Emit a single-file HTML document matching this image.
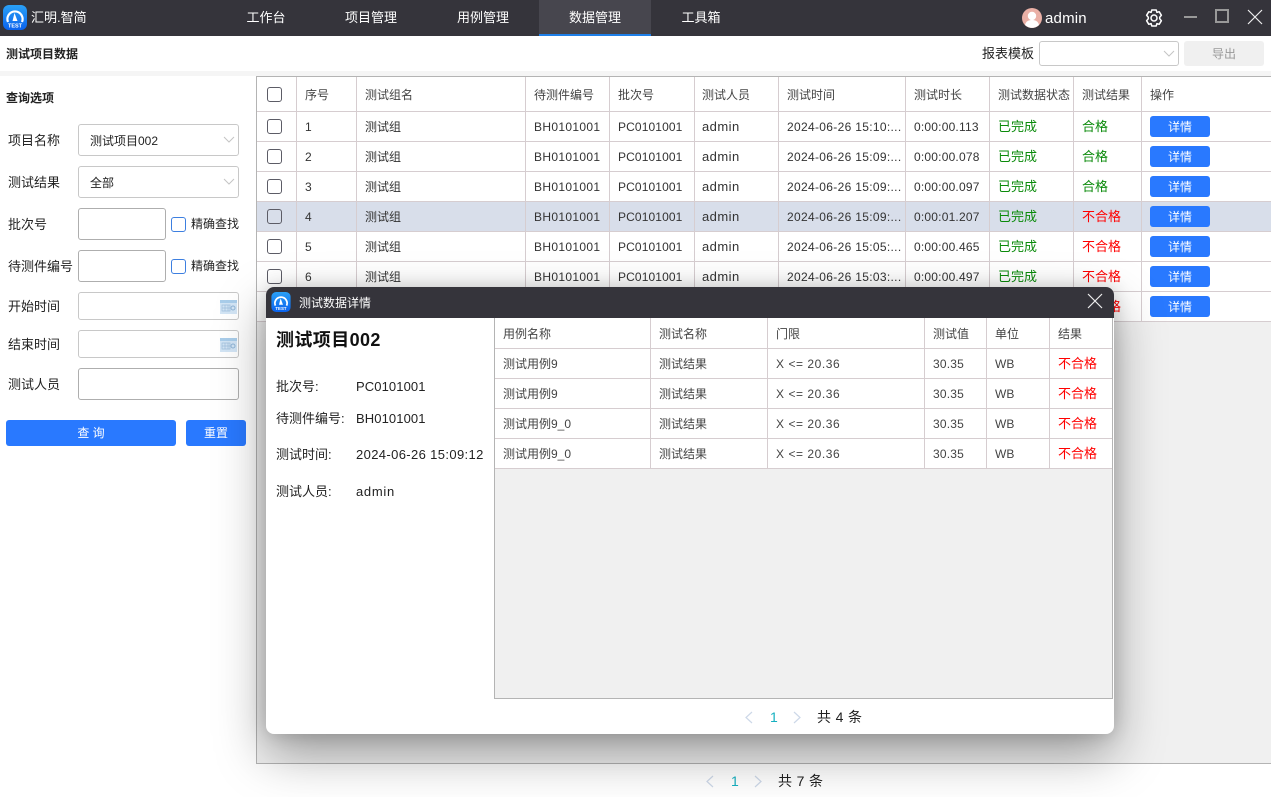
<!DOCTYPE html>
<html><head><meta charset="utf-8">
<style>
html,body{margin:0;padding:0}
body{width:1271px;height:797px;overflow:hidden;position:relative;background:#fff;font-family:"Liberation Sans","Noto Sans CJK SC",sans-serif;font-size:13px;color:#222}
.a{position:absolute;white-space:nowrap}
.t{position:absolute;white-space:nowrap;line-height:20px}
.nav{position:absolute;top:0;height:36px;line-height:35px;color:#fff;font-size:13px;text-align:center;width:112px}
.box{position:absolute;box-sizing:border-box;border:1px solid #c8c8c8;border-radius:3px;background:#fff}
.box2{position:absolute;box-sizing:border-box;border:1px solid #aeaeae;border-radius:3px;background:#fff}
.cb{position:absolute;box-sizing:border-box;width:15px;height:15px;border:1px solid #5c5c66;border-radius:3px;background:#fff}
.cbb{border-color:#3d7fe0}
.btn{position:absolute;background:#2979ff;color:#fff;text-align:center;border-radius:3px}
.hl{position:absolute;height:1px;background:#d6cdd0}
.vl{position:absolute;width:1px;background:#d6cdd0}
.g{color:#0a8a0a;font-size:13px}.r{color:#f00;font-size:13px}
.d{letter-spacing:.32px}.m{font-size:13px;letter-spacing:.45px}.p{letter-spacing:.12px}.h{letter-spacing:.33px}.x{letter-spacing:.55px}.u{letter-spacing:.2px}
</style></head><body>

<!-- top bar -->
<div class="a" style="left:0;top:0;width:1271px;height:36px;background:#35343b"></div>
<svg class="a" style="left:3px;top:5px" width="24" height="25" viewBox="0 0 24 25"><defs><linearGradient id="lg" x1="0" y1="0" x2="0" y2="1"><stop offset="0" stop-color="#2aa0f5"/><stop offset="1" stop-color="#0a62ee"/></linearGradient></defs><rect width="24" height="25" rx="6" fill="url(#lg)"/><path d="M5 17a7.6 7.6 0 1 1 14 0" fill="none" stroke="#fff" stroke-width="2.2"/><path d="M11.5 8l-2 8h5z" fill="#fff"/><text x="12" y="22.5" font-size="5.5" font-weight="bold" fill="#fff" text-anchor="middle" font-family="Liberation Sans">TEST</text></svg>
<div class="t" style="left:31px;top:8px;color:#fff;font-size:13px">汇明.智简</div>
<div class="nav" style="left:210px">工作台</div>
<div class="nav" style="left:315px">项目管理</div>
<div class="nav" style="left:427px">用例管理</div>
<div class="a" style="left:539px;top:0;width:112px;height:36px;background:#47464e;border-bottom:2px solid #1e7fe8;box-sizing:border-box"></div>
<div class="nav" style="left:539px">数据管理</div>
<div class="nav" style="left:645px">工具箱</div>
<svg class="a" style="left:1022px;top:8px" width="20" height="20" viewBox="0 0 20 20"><circle cx="10" cy="10" r="10" fill="#eab0a6"/><circle cx="10" cy="8" r="4.2" fill="#fff"/><path d="M3 17c1-4 4-5 7-5s6 1 7 5a10 10 0 0 1-14 0z" fill="#fff"/></svg>
<div class="t" style="left:1045px;top:9px;color:#fff;font-size:15px;letter-spacing:.2px">admin</div>
<svg class="a" style="left:1144px;top:8px" width="20" height="20" viewBox="0 0 20 20" fill="none" stroke="#fff" stroke-width="1.5" stroke-linejoin="round"><path d="M7.8 2h4.4l.7 2.4 2.3-.7 2.2 3.6-1.7 1.9 0 1.6 1.7 1.9-2.2 3.6-2.3-.7-.7 2.4H7.8l-.7-2.4-2.3.7-2.2-3.6 1.7-1.9 0-1.6-1.7-1.9 2.2-3.6 2.3.7z"/><circle cx="10" cy="10" r="3"/></svg>
<div class="a" style="left:1184px;top:16px;width:13px;height:2px;background:#999"></div>
<div class="a" style="left:1215px;top:9px;width:14px;height:14px;box-sizing:border-box;border:2px solid #999"></div>
<svg class="a" style="left:1247px;top:9px" width="16" height="16" viewBox="0 0 16 16" stroke="#eee" stroke-width="1.2"><path d="M1 1l14 14M15 1L1 15"/></svg>

<!-- sub header -->
<div class="a" style="left:0;top:71px;width:1271px;height:5px;background:#f5f5f5"></div>
<div class="t" style="left:6px;top:44px;font-size:12px;font-weight:bold;color:#222">测试项目数据</div>
<div class="t" style="left:982px;top:44px">报表模板</div>
<div class="box" style="left:1039px;top:41px;width:140px;height:25px"></div>
<svg class="a" style="left:1163px;top:50px" width="12" height="8" viewBox="0 0 12 8" fill="none" stroke="#c4c4c4"><path d="M1 1l5 5 5-5"/></svg>
<div class="a" style="left:1184px;top:41px;width:80px;height:25px;background:#f0f0f0;border-radius:3px;text-align:center;line-height:26px;color:#999;font-size:12px">导出</div>

<!-- left panel -->
<div class="t" style="left:6px;top:88px;font-size:12px;font-weight:bold">查询选项</div>
<div class="t" style="left:8px;top:131px">项目名称</div>
<div class="box" style="left:78px;top:124px;width:161px;height:32px"></div>
<div class="t" style="left:90px;top:131px;font-size:12px">测试项目002</div>
<svg class="a" style="left:223px;top:136px" width="12" height="8" viewBox="0 0 12 8" fill="none" stroke="#c4c4c4"><path d="M1 1l5 5 5-5"/></svg>
<div class="t" style="left:8px;top:173px">测试结果</div>
<div class="box" style="left:78px;top:166px;width:161px;height:32px"></div>
<div class="t" style="left:90px;top:173px;font-size:12px">全部</div>
<svg class="a" style="left:223px;top:178px" width="12" height="8" viewBox="0 0 12 8" fill="none" stroke="#c4c4c4"><path d="M1 1l5 5 5-5"/></svg>
<div class="t" style="left:8px;top:215px">批次号</div>
<div class="box2" style="left:78px;top:208px;width:88px;height:32px"></div>
<div class="cb cbb" style="left:171px;top:217px"></div>
<div class="t" style="left:191px;top:214px;font-size:12px">精确查找</div>
<div class="t" style="left:8px;top:257px">待测件编号</div>
<div class="box2" style="left:78px;top:250px;width:88px;height:32px"></div>
<div class="cb cbb" style="left:171px;top:259px"></div>
<div class="t" style="left:191px;top:256px;font-size:12px">精确查找</div>
<div class="t" style="left:8px;top:297px">开始时间</div>
<div class="box" style="left:78px;top:292px;width:161px;height:28px"></div>
<svg class="a" style="left:220px;top:300px" width="17" height="14" viewBox="0 0 17 14"><rect width="17" height="14" fill="#d3e5f5"/><rect width="17" height="3" fill="#a9cdea"/><path d="M2 5h8v6H2zM5 5v6M8 5v6M2 8h8" fill="none" stroke="#9fbfdc" stroke-width=".7"/><circle cx="13" cy="8" r="2" fill="none" stroke="#8fb4d6"/></svg>
<div class="t" style="left:8px;top:335px">结束时间</div>
<div class="box" style="left:78px;top:330px;width:161px;height:28px"></div>
<svg class="a" style="left:220px;top:338px" width="17" height="14" viewBox="0 0 17 14"><rect width="17" height="14" fill="#d3e5f5"/><rect width="17" height="3" fill="#a9cdea"/><path d="M2 5h8v6H2zM5 5v6M8 5v6M2 8h8" fill="none" stroke="#9fbfdc" stroke-width=".7"/><circle cx="13" cy="8" r="2" fill="none" stroke="#8fb4d6"/></svg>
<div class="t" style="left:8px;top:375px">测试人员</div>
<div class="box2" style="left:78px;top:368px;width:161px;height:32px"></div>
<div class="btn" style="left:6px;top:420px;width:170px;height:26px;line-height:27px;font-size:12px">查 询</div>
<div class="btn" style="left:186px;top:420px;width:60px;height:26px;line-height:27px;font-size:12px">重置</div>

<!-- main table -->
<div class="a" style="left:256px;top:76px;width:1015px;height:688px;box-sizing:border-box;border:1px solid #b4b4b4;border-right:0;background:#f0f0f0"></div>
<div class="a" style="left:257px;top:77px;width:1014px;height:244px;background:#fff"></div>
<div class="a" style="left:257px;top:202px;width:1014px;height:29px;background:#d8deea"></div>
<div class="hl" style="left:257px;top:111px;width:1014px"></div>
<div class="hl" style="left:257px;top:141px;width:1014px"></div>
<div class="hl" style="left:257px;top:171px;width:1014px"></div>
<div class="hl" style="left:257px;top:201px;width:1014px"></div>
<div class="hl" style="left:257px;top:231px;width:1014px"></div>
<div class="hl" style="left:257px;top:261px;width:1014px"></div>
<div class="hl" style="left:257px;top:291px;width:1014px"></div>
<div class="hl" style="left:257px;top:321px;width:1014px"></div>
<div class="vl" style="left:296px;top:77px;height:244px"></div>
<div class="vl" style="left:356px;top:77px;height:244px"></div>
<div class="vl" style="left:525px;top:77px;height:244px"></div>
<div class="vl" style="left:609px;top:77px;height:244px"></div>
<div class="vl" style="left:694px;top:77px;height:244px"></div>
<div class="vl" style="left:778px;top:77px;height:244px"></div>
<div class="vl" style="left:905px;top:77px;height:244px"></div>
<div class="vl" style="left:989px;top:77px;height:244px"></div>
<div class="vl" style="left:1073px;top:77px;height:244px"></div>
<div class="vl" style="left:1141px;top:77px;height:244px"></div>

<div class="cb" style="left:267px;top:87px"></div>
<div style="font-size:12px;color:#444">
<div class="t" style="left:305px;top:85px">序号</div>
<div class="t" style="left:365px;top:85px">测试组名</div>
<div class="t" style="left:534px;top:85px">待测件编号</div>
<div class="t" style="left:618px;top:85px">批次号</div>
<div class="t" style="left:702px;top:85px">测试人员</div>
<div class="t" style="left:787px;top:85px">测试时间</div>
<div class="t" style="left:914px;top:85px">测试时长</div>
<div class="t" style="left:998px;top:85px">测试数据状态</div>
<div class="t" style="left:1082px;top:85px">测试结果</div>
<div class="t" style="left:1150px;top:85px">操作</div>
</div>

<div style="font-size:12px;color:#333">
<div class="cb" style="left:267px;top:119px"></div><div class="t" style="left:305px;top:117px">1</div><div class="t" style="left:365px;top:117px">测试组</div><div class="t h" style="left:534px;top:117px">BH0101001</div><div class="t p" style="left:618px;top:117px">PC0101001</div><div class="t m" style="left:702px;top:117px">admin</div><div class="t d" style="left:787px;top:117px">2024-06-26 15:10:...</div><div class="t u" style="left:914px;top:117px">0:00:00.113</div><div class="t g" style="left:998px;top:117px">已完成</div><div class="t g" style="left:1082px;top:117px">合格</div><div class="btn" style="left:1150px;top:116px;width:60px;height:21px;line-height:22px">详情</div>
<div class="cb" style="left:267px;top:149px"></div><div class="t" style="left:305px;top:147px">2</div><div class="t" style="left:365px;top:147px">测试组</div><div class="t h" style="left:534px;top:147px">BH0101001</div><div class="t p" style="left:618px;top:147px">PC0101001</div><div class="t m" style="left:702px;top:147px">admin</div><div class="t d" style="left:787px;top:147px">2024-06-26 15:09:...</div><div class="t u" style="left:914px;top:147px">0:00:00.078</div><div class="t g" style="left:998px;top:147px">已完成</div><div class="t g" style="left:1082px;top:147px">合格</div><div class="btn" style="left:1150px;top:146px;width:60px;height:21px;line-height:22px">详情</div>
<div class="cb" style="left:267px;top:179px"></div><div class="t" style="left:305px;top:177px">3</div><div class="t" style="left:365px;top:177px">测试组</div><div class="t h" style="left:534px;top:177px">BH0101001</div><div class="t p" style="left:618px;top:177px">PC0101001</div><div class="t m" style="left:702px;top:177px">admin</div><div class="t d" style="left:787px;top:177px">2024-06-26 15:09:...</div><div class="t u" style="left:914px;top:177px">0:00:00.097</div><div class="t g" style="left:998px;top:177px">已完成</div><div class="t g" style="left:1082px;top:177px">合格</div><div class="btn" style="left:1150px;top:176px;width:60px;height:21px;line-height:22px">详情</div>
<div class="cb" style="left:267px;top:209px;background:#d8deea"></div><div class="t" style="left:305px;top:207px">4</div><div class="t" style="left:365px;top:207px">测试组</div><div class="t h" style="left:534px;top:207px">BH0101001</div><div class="t p" style="left:618px;top:207px">PC0101001</div><div class="t m" style="left:702px;top:207px">admin</div><div class="t d" style="left:787px;top:207px">2024-06-26 15:09:...</div><div class="t u" style="left:914px;top:207px">0:00:01.207</div><div class="t g" style="left:998px;top:207px">已完成</div><div class="t r" style="left:1082px;top:207px">不合格</div><div class="btn" style="left:1150px;top:206px;width:60px;height:21px;line-height:22px">详情</div>
<div class="cb" style="left:267px;top:239px"></div><div class="t" style="left:305px;top:237px">5</div><div class="t" style="left:365px;top:237px">测试组</div><div class="t h" style="left:534px;top:237px">BH0101001</div><div class="t p" style="left:618px;top:237px">PC0101001</div><div class="t m" style="left:702px;top:237px">admin</div><div class="t d" style="left:787px;top:237px">2024-06-26 15:05:...</div><div class="t u" style="left:914px;top:237px">0:00:00.465</div><div class="t g" style="left:998px;top:237px">已完成</div><div class="t r" style="left:1082px;top:237px">不合格</div><div class="btn" style="left:1150px;top:236px;width:60px;height:21px;line-height:22px">详情</div>
<div class="cb" style="left:267px;top:269px"></div><div class="t" style="left:305px;top:267px">6</div><div class="t" style="left:365px;top:267px">测试组</div><div class="t h" style="left:534px;top:267px">BH0101001</div><div class="t p" style="left:618px;top:267px">PC0101001</div><div class="t m" style="left:702px;top:267px">admin</div><div class="t d" style="left:787px;top:267px">2024-06-26 15:03:...</div><div class="t u" style="left:914px;top:267px">0:00:00.497</div><div class="t g" style="left:998px;top:267px">已完成</div><div class="t r" style="left:1082px;top:267px">不合格</div><div class="btn" style="left:1150px;top:266px;width:60px;height:21px;line-height:22px">详情</div>
<div class="t r" style="left:1082px;top:297px">不合格</div><div class="btn" style="left:1150px;top:296px;width:60px;height:21px;line-height:22px">详情</div>
</div>

<!-- main pager -->
<svg class="a" style="left:705px;top:775px" width="10" height="13" viewBox="0 0 10 13" fill="none" stroke="#cdd8e8" stroke-width="1.2"><path d="M8 1L2 6.5 8 12"/></svg>
<div class="t" style="left:731px;top:771px;font-size:14px;color:#15b0c0">1</div>
<svg class="a" style="left:753px;top:775px" width="10" height="13" viewBox="0 0 10 13" fill="none" stroke="#cdd8e8" stroke-width="1.2"><path d="M2 1l6 5.5L2 12"/></svg>
<div class="t" style="left:778px;top:771px;font-size:14px;letter-spacing:.35px">共 7 条</div>

<!-- dialog -->
<div class="a" style="left:266px;top:287px;width:848px;height:447px;background:#fff;border-radius:8px;box-shadow:0 20px 50px rgba(0,0,0,.36),0 0 18px rgba(0,0,0,.16)"></div>
<div class="a" style="left:266px;top:287px;width:848px;height:31px;background:#35343b;border-radius:8px 8px 0 0"></div>
<svg class="a" style="left:271px;top:292px" width="20" height="20" viewBox="0 0 24 25"><rect width="24" height="25" rx="6" fill="url(#lg)"/><path d="M5 17a7.6 7.6 0 1 1 14 0" fill="none" stroke="#fff" stroke-width="2.2"/><path d="M11.5 8l-2 8h5z" fill="#fff"/><text x="12" y="22.5" font-size="5.5" font-weight="bold" fill="#fff" text-anchor="middle" font-family="Liberation Sans">TEST</text></svg>
<div class="t" style="left:299px;top:293px;color:#fff;font-size:12px">测试数据详情</div>
<svg class="a" style="left:1087px;top:293px" width="16" height="16" viewBox="0 0 16 16" stroke="#eee" stroke-width="1.2"><path d="M1 1l14 14M15 1L1 15"/></svg>

<div class="t" style="left:276px;top:330px;font-size:18px;font-weight:bold;color:#111;letter-spacing:.4px">测试项目002</div>
<div class="t" style="left:276px;top:377px">批次号:</div><div class="t" style="left:356px;top:377px;letter-spacing:.1px">PC0101001</div>
<div class="t" style="left:276px;top:409px">待测件编号:</div><div class="t" style="left:356px;top:409px;letter-spacing:.1px">BH0101001</div>
<div class="t" style="left:276px;top:445px">测试时间:</div><div class="t" style="left:356px;top:445px;letter-spacing:.37px">2024-06-26 15:09:12</div>
<div class="t" style="left:276px;top:482px">测试人员:</div><div class="t" style="left:356px;top:482px;letter-spacing:.7px">admin</div>

<div class="a" style="left:494px;top:318px;width:619px;height:381px;box-sizing:border-box;border:1px solid #b4b4b4;border-top:0;background:#f0f0f0"></div>
<div class="a" style="left:495px;top:318px;width:617px;height:150px;background:#fff"></div>
<div class="hl" style="left:495px;top:348px;width:617px"></div>
<div class="hl" style="left:495px;top:378px;width:617px"></div>
<div class="hl" style="left:495px;top:408px;width:617px"></div>
<div class="hl" style="left:495px;top:438px;width:617px"></div>
<div class="hl" style="left:495px;top:468px;width:617px"></div>
<div class="vl" style="left:650px;top:318px;height:150px"></div>
<div class="vl" style="left:767px;top:318px;height:150px"></div>
<div class="vl" style="left:924px;top:318px;height:150px"></div>
<div class="vl" style="left:986px;top:318px;height:150px"></div>
<div class="vl" style="left:1049px;top:318px;height:150px"></div>
<div style="font-size:12px;color:#444">
<div class="t" style="left:503px;top:324px">用例名称</div><div class="t" style="left:659px;top:324px">测试名称</div><div class="t" style="left:776px;top:324px">门限</div><div class="t" style="left:933px;top:324px">测试值</div><div class="t" style="left:995px;top:324px">单位</div><div class="t" style="left:1058px;top:324px">结果</div>
<div class="t" style="left:503px;top:354px">测试用例9</div><div class="t" style="left:659px;top:354px">测试结果</div><div class="t x" style="left:776px;top:354px">X &lt;= 20.36</div><div class="t u" style="left:933px;top:354px">30.35</div><div class="t" style="left:995px;top:354px">WB</div><div class="t r" style="left:1058px;top:354px">不合格</div>
<div class="t" style="left:503px;top:384px">测试用例9</div><div class="t" style="left:659px;top:384px">测试结果</div><div class="t x" style="left:776px;top:384px">X &lt;= 20.36</div><div class="t u" style="left:933px;top:384px">30.35</div><div class="t" style="left:995px;top:384px">WB</div><div class="t r" style="left:1058px;top:384px">不合格</div>
<div class="t" style="left:503px;top:414px">测试用例9_0</div><div class="t" style="left:659px;top:414px">测试结果</div><div class="t x" style="left:776px;top:414px">X &lt;= 20.36</div><div class="t u" style="left:933px;top:414px">30.35</div><div class="t" style="left:995px;top:414px">WB</div><div class="t r" style="left:1058px;top:414px">不合格</div>
<div class="t" style="left:503px;top:444px">测试用例9_0</div><div class="t" style="left:659px;top:444px">测试结果</div><div class="t x" style="left:776px;top:444px">X &lt;= 20.36</div><div class="t u" style="left:933px;top:444px">30.35</div><div class="t" style="left:995px;top:444px">WB</div><div class="t r" style="left:1058px;top:444px">不合格</div>
</div>

<svg class="a" style="left:744px;top:711px" width="10" height="13" viewBox="0 0 10 13" fill="none" stroke="#cdd8e8" stroke-width="1.2"><path d="M8 1L2 6.5 8 12"/></svg>
<div class="t" style="left:770px;top:707px;font-size:14px;color:#15b0c0">1</div>
<svg class="a" style="left:792px;top:711px" width="10" height="13" viewBox="0 0 10 13" fill="none" stroke="#cdd8e8" stroke-width="1.2"><path d="M2 1l6 5.5L2 12"/></svg>
<div class="t" style="left:817px;top:707px;font-size:14px;letter-spacing:.35px">共 4 条</div>

</body></html>
